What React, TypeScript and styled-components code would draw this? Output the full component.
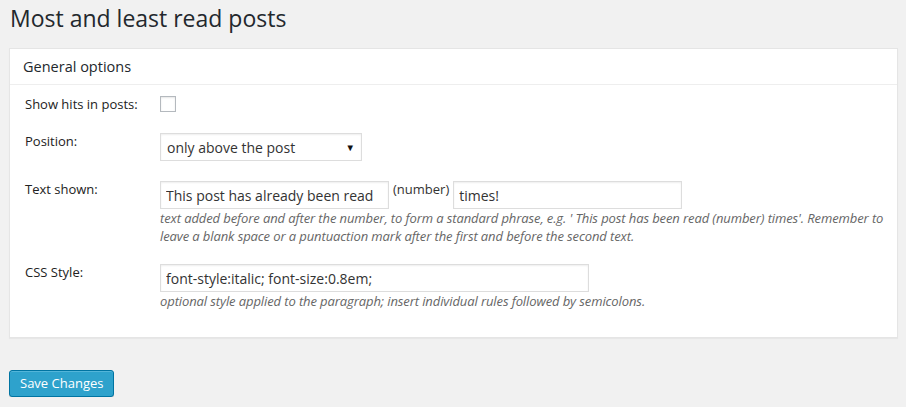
import React from 'react'
import styled, { createGlobalStyle } from 'styled-components'

const GlobalStyle = createGlobalStyle`
  html, body {
    margin: 0;
    padding: 0;
    background: #f1f1f1;
    font-family: "Open Sans", "Liberation Sans", sans-serif;
    color: #444;
  }
`

const Wrap = styled.div`
  padding: 0 8px 0 9px;
`

const Title = styled.h1`
  margin: 0;
  padding: 4px 0 0 1px;
  font-size: 23px;
  font-weight: 400;
  line-height: 29px;
  color: #23282d;
`

const Postbox = styled.div`
  margin: 15px 0 0 0;
  background: #fff;
  border: 1px solid #e5e5e5;
  box-shadow: 0 1px 1px rgba(0, 0, 0, 0.04);
`

const BoxHeader = styled.h3`
  margin: 0;
  padding: 8px 13px;
  font-size: 14.5px;
  font-weight: 400;
  line-height: 19px;
  color: #23282d;
  border-bottom: 1px solid #eee;
`

const FormGrid = styled.div`
  display: grid;
  grid-template-columns: 135px 1fr;
  row-gap: 20px;
  padding: 11px 12px 27px 15px;
`

const Label = styled.div`
  font-size: 13px;
  line-height: 17px;
  color: #222;
`

const Field = styled.div`
  display: flex;
  flex-direction: column;
  align-items: flex-start;
`

const InlineRow = styled.div`
  display: flex;
  align-items: flex-start;
  gap: 4px;
`

const Checkbox = styled.span`
  display: block;
  width: 14px;
  height: 14px;
  border: 1px solid #b4b9be;
  background: #fff;
  box-shadow: inset 0 1px 2px rgba(0, 0, 0, 0.1);
`

const TextInput = styled.input<{ $w: number }>`
  box-sizing: border-box;
  width: ${p => p.$w}px;
  height: 28px;
  margin: 0;
  padding: 3px 5px;
  font-family: "Open Sans", "Liberation Sans", sans-serif;
  font-size: 14px;
  color: #333;
  border: 1px solid #ddd;
  background: #fff;
  box-shadow: inset 0 1px 2px rgba(0, 0, 0, 0.07);
  outline: none;
`

const SelectBox = styled.div`
  position: relative;
  width: 202px;

  &::after {
    content: '▼';
    position: absolute;
    right: 7px;
    top: 8px;
    font-size: 9.5px;
    color: #111;
    pointer-events: none;
  }
`

const Select = styled.select`
  appearance: none;
  box-sizing: border-box;
  width: 100%;
  height: 28px;
  margin: 0;
  padding: 2px 6px;
  font-family: "Open Sans", "Liberation Sans", sans-serif;
  font-size: 14px;
  color: #333;
  border: 1px solid #ddd;
  border-radius: 0;
  background: #fff;
  box-shadow: inset 0 1px 2px rgba(0, 0, 0, 0.07);
  outline: none;
`

const Sup = styled.span`
  font-size: 13px;
  line-height: 16px;
  color: #333;
`

const Description = styled.p<{ $gapAfter?: number }>`
  margin: 0 0 ${p => p.$gapAfter ?? 0}px;
  max-width: 740px;
  font-size: 13px;
  font-style: italic;
  line-height: 18px;
  letter-spacing: -0.1px;
  color: #666;
`

const SaveButton = styled.button`
  margin: 32px 0 0;
  height: 27px;
  padding: 0 10px 1px;
  font-family: "Open Sans", "Liberation Sans", sans-serif;
  font-size: 13px;
  color: #fff;
  background: #2ea2cc;
  border: 1px solid #0074a2;
  border-radius: 3px;
  box-shadow: inset 0 1px 0 rgba(120, 200, 230, 0.5), 0 1px 0 rgba(0, 0, 0, 0.15);
  cursor: pointer;
`

export default function App() {
  return (
    <>
      <GlobalStyle />
      <Wrap>
        <Title>Most and least read posts</Title>
        <Postbox>
          <BoxHeader>General options</BoxHeader>
          <FormGrid>
            <Label>Show hits in posts:</Label>
            <Field>
              <Checkbox />
            </Field>

            <Label>Position:</Label>
            <Field>
              <SelectBox>
                <Select defaultValue="above">
                  <option value="above">only above the post</option>
                  <option value="below">only below the post</option>
                  <option value="both">above and below the post</option>
                </Select>
              </SelectBox>
            </Field>

            <Label>Text shown:</Label>
            <Field>
              <InlineRow>
                <TextInput $w={229} defaultValue="This post has already been read" />
                <Sup>(number)</Sup>
                <TextInput $w={229} defaultValue="times!" />
              </InlineRow>
              <Description $gapAfter={-1}>
                text added before and after the number, to form a standard phrase, e.g. ' This post has been read (number) times'. Remember to leave a blank space or a puntuaction mark after the first and before the second text.
              </Description>
            </Field>

            <Label>CSS Style:</Label>
            <Field>
              <TextInput $w={429} defaultValue="font-style:italic; font-size:0.8em;" />
              <Description>
                optional style applied to the paragraph; insert individual rules followed by semicolons.
              </Description>
            </Field>
          </FormGrid>
        </Postbox>
        <SaveButton>Save Changes</SaveButton>
      </Wrap>
    </>
  )
}
